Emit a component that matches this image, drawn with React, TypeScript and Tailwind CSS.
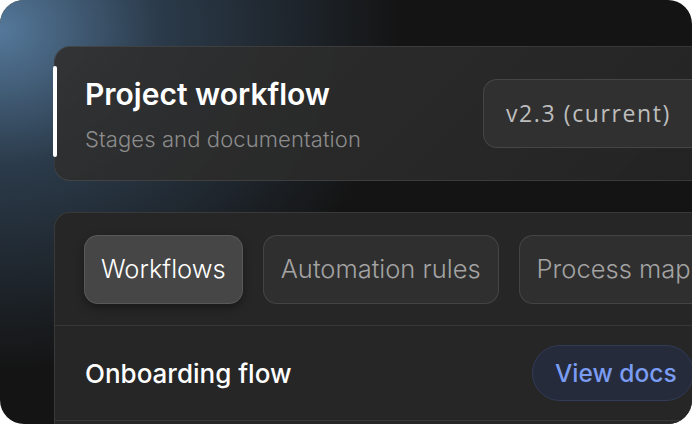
import React from "react";

const inter = { fontFamily: "Inter, 'Noto Sans', sans-serif" };

function Tab({ label, active }: { label: string; active?: boolean }) {
  return (
    <div
      className={
        active
          ? "shrink-0 h-[69px] px-[16px] flex items-center rounded-[14px] border border-white/10 bg-[#464646] text-white shadow-[0_4px_10px_rgba(0,0,0,0.35)]"
          : "shrink-0 h-[69px] px-[17px] flex items-center rounded-[14px] border border-white/10 bg-[#2f2f2f] text-[#a3a3a3]"
      }
    >
      <span className="text-[25.5px] font-light">{label}</span>
    </div>
  );
}

export default function App() {
  return (
    <div className="w-[692px] h-[424px] bg-white" style={inter}>
      <div className="relative w-full h-full overflow-hidden rounded-[24px] bg-[#141414]">
        <div className="absolute inset-0 bg-[radial-gradient(ellipse_400px_340px_at_0px_30px,rgba(88,126,162,0.95),rgba(58,84,110,0.6)_40%,rgba(20,20,20,0)_100%)]" />
        <div className="relative flex flex-col gap-[31px] pl-[54px] pt-[46px]">
          {/* header card */}
          <div className="relative w-[680px] h-[135px] rounded-[16px] border border-white/[0.09] bg-[linear-gradient(135deg,rgba(48,48,48,0.92),rgba(36,36,36,0.96))] pl-[30px] pt-[30px]">
            <div className="absolute left-[-2px] top-[19px] w-[4px] h-[91px] rounded-full bg-white" />
            <div className="flex flex-col">
              <div className="text-[30px] leading-[34px] font-semibold text-white">
                Project workflow
              </div>
              <div className="mt-[15px] text-[22px] leading-[26px] font-light text-[#8c8c8c] tracking-[0.1px]">
                Stages and documentation
              </div>
            </div>
            <div className="absolute left-[428px] top-[32px] h-[69px] w-[260px] rounded-[14px] border border-white/10 bg-[#303030] flex items-center pl-[22px]">
              <span
                className="text-[23px] tracking-[1.6px] text-[#bdbdbd]"
                style={{ fontFamily: "'Open Sans', 'Noto Sans', sans-serif" }}
              >
                v2.3 (current)
              </span>
            </div>
          </div>

          {/* tabs card */}
          <div className="w-[680px] h-[240px] rounded-[16px] border border-white/[0.09] bg-[#262626] flex flex-col">
            <div className="flex gap-[20px] pl-[29px] pt-[22px] pb-[21px] border-b border-white/[0.08]">
              <Tab label="Workflows" active />
              <Tab label="Automation rules" />
              <Tab label="Process map" />
            </div>
            <div className="flex items-center justify-between pl-[30px] h-[95px] border-b border-white/[0.08]">
              <span className="text-[26px] font-medium text-white">Onboarding flow</span>
              <div className="mr-[39px] w-[162px] h-[56px] rounded-full border border-[#323c58] bg-[#252b3b] flex items-center pl-[22px]">
                <span className="text-[24.5px] font-medium text-[#7a9cf2]">View docs</span>
              </div>
            </div>
          </div>
        </div>
      </div>
    </div>
  );
}
